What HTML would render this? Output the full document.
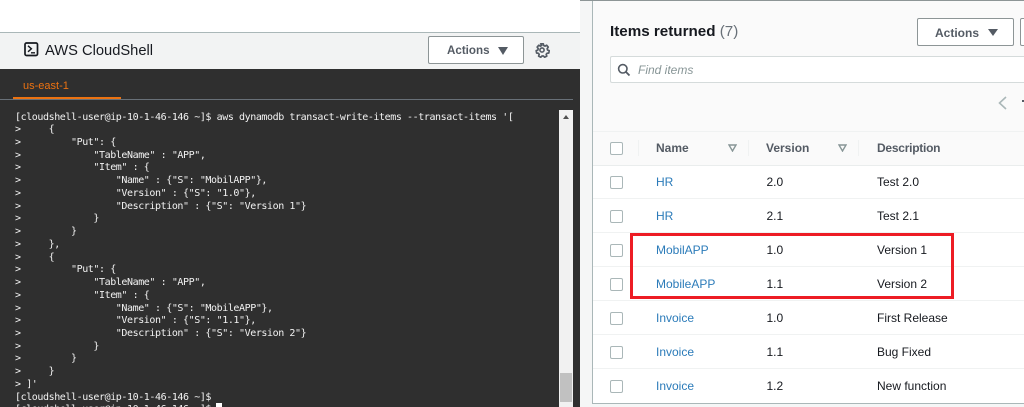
<!DOCTYPE html>
<html><head><meta charset="utf-8"><style>
html,body{margin:0;padding:0;width:1024px;height:407px;overflow:hidden;background:#fff}
body{position:relative;font-family:"Liberation Sans",sans-serif}
#w{position:absolute;left:0;top:0;width:1024px;height:407px;overflow:hidden;filter:blur(.3px)}
.a{position:absolute;white-space:nowrap}
pre{margin:0;position:absolute;left:15px;top:111px;font:10px/12.73px "DejaVu Sans Mono","Liberation Mono",monospace;letter-spacing:-.42px;color:#f2f2f2}
.btn{position:absolute;box-sizing:border-box;background:#fff;border:1px solid #8d9596;border-radius:2px;color:#545b64;font-weight:bold;font-size:12px}
.tri{position:absolute;width:0;height:0;border-left:5.5px solid transparent;border-right:5.5px solid transparent;border-top:8px solid #545b64}
.cb{position:absolute;left:610px;width:11px;height:11px;border:1px solid #aab7b8;border-radius:2px;background:#fff}
.sep{position:absolute;left:593px;right:0;height:1px;background:#f0f2f2}
.l{color:#2b7bb9;left:656px}.v{color:#16191f;left:766.5px}.d{color:#16191f;left:877px}
.t{position:absolute;font-size:12px;line-height:14px;white-space:nowrap}
.h{position:absolute;font-size:12px;font-weight:bold;color:#545b64;line-height:14px;top:141px}
.ft{position:absolute;top:144px}
.dv{position:absolute;top:140px;width:1px;height:16px;background:#f0f2f2}
</style></head><body><div id="w">
<div class="a" style="left:0;top:32px;width:580px;height:1px;background:#aab7b8"></div>
<div class="a" style="left:0;top:33px;width:580px;height:36px;background:#f2f3f3"></div>
<svg class="a" style="left:24px;top:42px" width="15" height="15" viewBox="0 0 15 15"><rect x="1" y="1" width="12.5" height="12.5" rx="1.5" fill="none" stroke="#16191f" stroke-width="1.7"/><path d="M4 3.8l3.4 3-3.4 3M7 10.8h4" fill="none" stroke="#16191f" stroke-width="1.4"/></svg>
<div class="a" style="left:45px;top:42px;font-size:14.7px;line-height:18px;color:#16191f">AWS CloudShell</div>
<div class="btn" style="left:428px;top:36px;width:96px;height:28px"><span class="a" style="left:18px;top:7px;line-height:14px;font-size:11.6px">Actions</span><span class="tri" style="left:69px;top:10px"></span></div>
<svg class="a" style="left:534px;top:42px" width="16" height="16" viewBox="0 0 16 16"><path d="M6.7 1.8h2.6l.4 1.7 1.3.6 1.6-.9 1.6 1.9-1 1.5.3 1.4 1.7.7-.4 2.3-1.8.3-.8 1.1.6 1.7-2.2 1.1-1.2-1.2h-1.4l-1.2 1.2-2.2-1.1.6-1.7-.8-1.1-1.8-.3-.4-2.3 1.7-.7.3-1.4-1-1.5 1.6-1.9 1.6.9 1.3-.6z" fill="none" stroke="#545b64" stroke-width="1.7" stroke-linejoin="round"/><circle cx="8" cy="8" r="2.1" fill="none" stroke="#545b64" stroke-width="1.6"/></svg>
<div class="a" style="left:0;top:69px;width:580px;height:338px;background:#2f2f2f"></div>
<div class="a" style="left:23px;top:79px;font-size:11px;line-height:14px;color:#ec7211">us-east-1</div>
<div class="a" style="left:0;top:99px;width:580px;height:1px;background:#687078"></div>
<div class="a" style="left:13px;top:97px;width:108px;height:2px;background:#ec7211"></div>
<pre style="top:111.5px">[cloudshell-user@ip-10-1-46-146 ~]$ aws dynamodb transact-write-items --transact-items '[
&gt;     {
&gt;         "Put": {
&gt;             "TableName" : "APP",
&gt;             "Item" : {
&gt;                 "Name" : {"S": "MobilAPP"},
&gt;                 "Version" : {"S": "1.0"},
&gt;                 "Description" : {"S": "Version 1"}
&gt;             }
&gt;         }
&gt;     },
&gt;     {
&gt;         "Put": {
&gt;             "TableName" : "APP",
&gt;             "Item" : {
&gt;                 "Name" : {"S": "MobileAPP"},
&gt;                 "Version" : {"S": "1.1"},
&gt;                 "Description" : {"S": "Version 2"}
&gt;             }
&gt;         }
&gt;     }
&gt; ]'
[cloudshell-user@ip-10-1-46-146 ~]$
[cloudshell-user@ip-10-1-46-146 ~]$</pre>
<div class="a" style="left:216px;top:403px;width:6px;height:4px;background:#fff"></div>
<div class="a" style="left:559px;top:110px;width:14px;height:297px;background:#f1f1f1"></div>
<div class="a" style="left:560px;top:373px;width:12px;height:29px;background:#c1c1c1"></div>
<div class="a" style="left:563px;top:115px;width:0;height:0;border-left:3.5px solid transparent;border-right:3.5px solid transparent;border-bottom:4px solid #505050"></div>
<div class="a" style="left:573px;top:69px;width:7px;height:338px;background:#2f2f2f"></div>
<div class="a" style="left:580px;top:0;width:444px;height:407px;background:#f5f6f6"></div>
<div class="a" style="left:580px;top:0;width:444px;height:1px;background:#8d9596"></div>
<div class="a" style="left:592px;top:1px;width:432px;height:402px;background:#fafafa;border-left:1px solid #aab7b8"></div>
<div class="a" style="left:592px;top:403px;width:432px;height:1px;background:#aab7b8"></div>
<div class="a" style="left:610px;top:23px;font-size:15.2px;line-height:18px;font-weight:bold;color:#16191f">Items returned <span style="font-weight:normal;color:#687078">(7)</span></div>
<div class="btn" style="left:917px;top:18px;width:97px;height:28px"><span class="a" style="left:17px;top:7px;line-height:14px">Actions</span><span class="tri" style="left:70px;top:10px;border-left-width:5px;border-right-width:5px;border-top-width:7px"></span></div>
<div class="btn" style="left:1020px;top:18px;width:20px;height:28px"></div>
<div class="a" style="left:610px;top:56px;width:414px;height:27px;box-sizing:border-box;background:#fff;border:1px solid #d5dbdb;border-right:0;border-radius:2px 0 0 2px"></div>
<svg class="a" style="left:617px;top:63px" width="14" height="14" viewBox="0 0 14 14"><circle cx="5.8" cy="5.8" r="4.2" fill="none" stroke="#545b64" stroke-width="1.6"/><path d="M8.8 8.8l3.7 3.7" stroke="#545b64" stroke-width="1.8"/></svg>
<div class="a" style="left:638px;top:63px;font-size:12px;line-height:14px;font-style:italic;color:#879596">Find items</div>
<svg class="a" style="left:996px;top:96px" width="14" height="14" viewBox="0 0 14 14"><path d="M10 1L3.5 7l6.5 6" fill="none" stroke="#aab7b8" stroke-width="1.6"/></svg>
<div class="a" style="left:1022px;top:100px;width:2px;height:2px;background:#545b64"></div>
<div class="a" style="left:593px;top:131px;width:431px;height:1px;background:#f0f2f2"></div>
<div class="a" style="left:593px;top:165px;width:431px;height:238px;background:#fff"></div>
<div class="a" style="left:593px;top:165px;width:431px;height:1px;background:#eaeded"></div>
<div class="cb" style="top:142px"></div>
<div class="dv" style="left:638px"></div><div class="dv" style="left:748px"></div><div class="dv" style="left:858px"></div>
<div class="h" style="left:656px">Name</div>
<svg class="ft" style="left:728px" width="9" height="8" viewBox="0 0 9 8"><path d="M1 1h7L4.5 7z" fill="none" stroke="#879596" stroke-width="1.4"/></svg>
<div class="h" style="left:766px">Version</div>
<svg class="ft" style="left:838px" width="9" height="8" viewBox="0 0 9 8"><path d="M1 1h7L4.5 7z" fill="none" stroke="#879596" stroke-width="1.4"/></svg>
<div class="h" style="left:877px;letter-spacing:-.25px">Description</div>
<div class="sep" style="top:198px"></div><div class="sep" style="top:232px"></div><div class="sep" style="top:266px"></div><div class="sep" style="top:300px"></div><div class="sep" style="top:334px"></div><div class="sep" style="top:368px"></div>
<div class="cb" style="top:176px"></div><div class="t l" style="top:175px">HR</div><div class="t v" style="top:175px">2.0</div><div class="t d" style="top:175px">Test 2.0</div>
<div class="cb" style="top:210px"></div><div class="t l" style="top:209px">HR</div><div class="t v" style="top:209px">2.1</div><div class="t d" style="top:209px">Test 2.1</div>
<div class="cb" style="top:244px"></div><div class="t l" style="top:243px">MobilAPP</div><div class="t v" style="top:243px">1.0</div><div class="t d" style="top:243px">Version 1</div>
<div class="cb" style="top:278px"></div><div class="t l" style="top:277px">MobileAPP</div><div class="t v" style="top:277px">1.1</div><div class="t d" style="top:277px">Version 2</div>
<div class="cb" style="top:312px"></div><div class="t l" style="top:311px">Invoice</div><div class="t v" style="top:311px">1.0</div><div class="t d" style="top:311px">First Release</div>
<div class="cb" style="top:346px"></div><div class="t l" style="top:345px">Invoice</div><div class="t v" style="top:345px">1.1</div><div class="t d" style="top:345px">Bug Fixed</div>
<div class="cb" style="top:380px"></div><div class="t l" style="top:379px">Invoice</div><div class="t v" style="top:379px">1.2</div><div class="t d" style="top:379px">New function</div>
<div class="a" style="left:630px;top:233px;width:318px;height:60px;border:3px solid #ed1c24"></div>
</div></body></html>
